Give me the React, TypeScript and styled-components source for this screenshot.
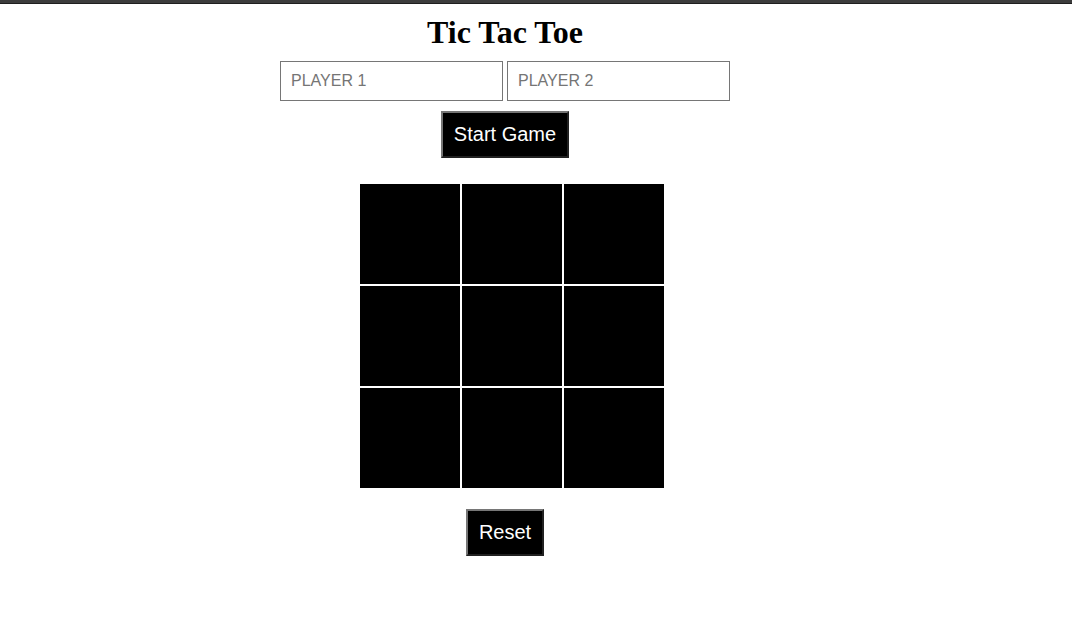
import React from "react";
import styled, { createGlobalStyle } from "styled-components";

const Global = createGlobalStyle`
  html, body { margin: 0; padding: 0; background: #fff; }
  body { font-family: "Liberation Serif", "Times New Roman", serif; }
`;

const TopBar = styled.div`
  height: 3px;
  background: #3c3c3c;
  border-bottom: 1px solid #1e1e1e;
`;

const Main = styled.main`
  width: 1010px;
  display: flex;
  flex-direction: column;
  align-items: center;
`;

const Title = styled.h1`
  margin: 10px 0 10px;
  font-family: "Liberation Serif", "Times New Roman", serif;
  font-size: 32px;
  font-weight: bold;
  color: #000;
  line-height: normal;
`;

const Inputs = styled.div`
  display: flex;
  gap: 4px;
`;

const PlayerInput = styled.input`
  box-sizing: border-box;
  width: 223px;
  height: 40px;
  padding: 10px;
  border: 1px solid #767676;
  font-family: "Liberation Sans", Arial, sans-serif;
  font-size: 16px;
  outline: none;
  &::placeholder {
    color: #757575;
  }
`;

const ActionButton = styled.button<{ $top: number }>`
  box-sizing: border-box;
  margin-top: ${(p) => p.$top}px;
  height: 47px;
  padding: 10px 10.5px;
  background: #000;
  color: #fff;
  border: 2px outset #767676;
  font-family: "Liberation Sans", Arial, sans-serif;
  font-size: 20px;
  line-height: normal;
  cursor: pointer;
`;

const Board = styled.div`
  margin-top: 25px;
  margin-left: 14px;
  display: grid;
  grid-template-columns: repeat(3, 102px);
  grid-template-rows: repeat(3, 102px);
`;

const Cell = styled.div`
  box-sizing: border-box;
  background: #000;
  border: 1px solid #fff;
`;

export default function App() {
  return (
    <>
      <Global />
      <TopBar />
      <Main>
        <Title>Tic Tac Toe</Title>
        <Inputs>
          <PlayerInput placeholder="PLAYER 1" />
          <PlayerInput placeholder="PLAYER 2" />
        </Inputs>
        <ActionButton $top={10}>Start Game</ActionButton>
        <Board>
          {Array.from({ length: 9 }).map((_, i) => (
            <Cell key={i} />
          ))}
        </Board>
        <ActionButton $top={20}>Reset</ActionButton>
      </Main>
    </>
  );
}
